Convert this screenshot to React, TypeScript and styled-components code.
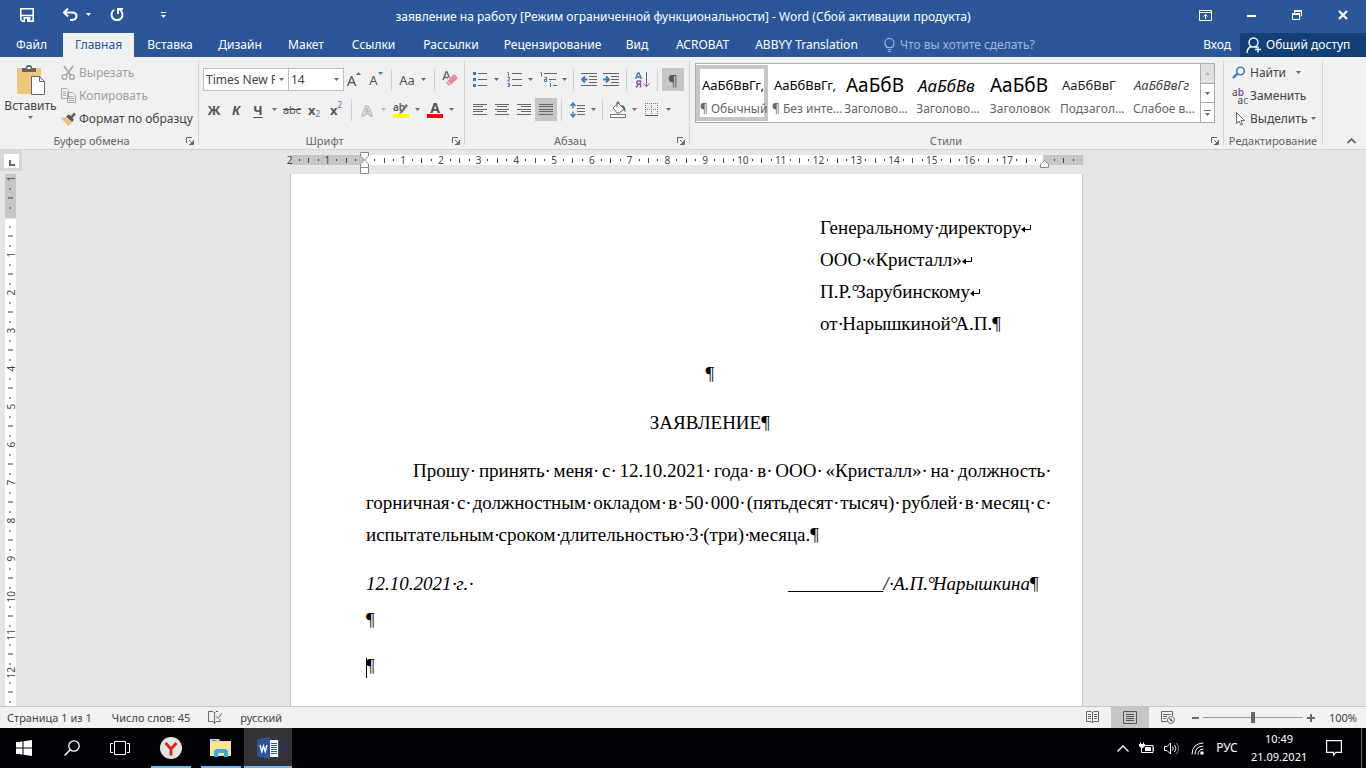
import React from "react";
import styled, { createGlobalStyle, css } from "styled-components";

const blue = "#2b579a";
const grey = "#6a6a6a";
const accent = "#3b78b8";
const uiFont = '"Noto Sans", "Open Sans", sans-serif';

const GlobalStyle = createGlobalStyle`
  *, *::before, *::after { box-sizing: border-box; }
  body { margin: 0; font-family: ${uiFont}; font-size: 12px; line-height: 16px; color: #444; }
  button, select, input { font: inherit; color: inherit; }
  button { border: 0; padding: 0; background: none; }
  svg { display: block; flex: none; }
`;

const Window = styled.div`
  display: flex;
  flex-direction: column;
  min-height: 100vh;
  background: #e6e6e6;
`;

/* ---------- title bar ---------- */

const TitleBar = styled.header`
  display: grid;
  grid-template-columns: 1fr auto 1fr;
  height: 33px;
  background: ${blue};
  color: #fff;
`;

const QuickAccess = styled.div`
  display: flex;
  align-items: center;
  padding: 0 0 4px 16px;
`;

const QuickButton = styled.button<{ $w: number; $gap?: number }>`
  display: flex;
  justify-content: center;
  width: ${(p) => p.$w}px;
  margin-left: ${(p) => p.$gap ?? 0}px;
`;

const Title = styled.h1`
  margin: 0;
  padding-top: 1px;
  font-size: 12px;
  line-height: 32px;
  font-weight: 400;
  white-space: nowrap;
`;

const WindowButtons = styled.div`
  display: flex;
  justify-content: flex-end;
  align-items: center;
  padding-bottom: 3px;
`;

const WindowButton = styled.button`
  display: flex;
  justify-content: center;
  width: 46px;
`;

/* ---------- tabs ---------- */

const TabBar = styled.nav`
  display: flex;
  height: 24px;
  background: ${blue};
  color: #fff;
`;

const Tab = styled.button<{ $w: number; $active?: boolean }>`
  width: ${(p) => p.$w}px;
  text-align: center;
  white-space: nowrap;
  ${(p) =>
    p.$active &&
    css`
      background: #f1f1f1;
      color: ${blue};
    `}
`;

const TellMe = styled.label`
  display: flex;
  flex: 1;
  align-items: center;
  gap: 5px;
  padding-left: 14px;
`;

const TellMeInput = styled.input`
  flex: 1;
  min-width: 0;
  padding: 0;
  border: 0;
  outline: 0;
  background: none;
  &::placeholder { color: #9fb6d8; opacity: 1; }
`;

const SignIn = styled.a`
  padding: 0 9px;
  color: #fff;
  line-height: 24px;
  text-decoration: none;
`;

const Share = styled.button`
  display: flex;
  align-items: center;
  gap: 4px;
  width: 126px;
  padding-left: 6px;
  background: #123f76;
`;

/* ---------- ribbon ---------- */

const Ribbon = styled.section`
  display: flex;
  height: 93px;
  background: #f1f1f1;
  border-bottom: 1px solid #d2d2d2;
`;

const Group = styled.div<{ $w?: number; $left: number; $right?: number }>`
  position: relative;
  display: flex;
  flex-direction: column;
  ${(p) => (p.$w ? `width: ${p.$w}px; flex: none;` : "flex: 1; min-width: 0;")}
  margin: 4px 0;
  padding: 0 ${(p) => p.$right ?? 0}px 0 ${(p) => p.$left}px;
  border-right: 1px solid #d4d4d4;
`;

const GroupBody = styled.div<{ $column?: boolean }>`
  display: flex;
  flex: none;
  flex-direction: ${(p) => (p.$column ? "column" : "row")};
  height: 72px;
`;

const GroupLabel = styled.div<{ $launcher?: boolean }>`
  height: 12px;
  padding-right: ${(p) => (p.$launcher ? 18 : 0)}px;
  color: #666;
  font-size: 11px;
  text-align: center;
  white-space: nowrap;
`;

const Launcher = styled.button`
  position: absolute;
  right: 4px;
  bottom: 0;
`;

const PasteButton = styled.button`
  display: flex;
  flex: none;
  flex-direction: column;
  align-items: center;
  width: 55px;
  padding-top: 4px;
  gap: 2px;
`;

const Commands = styled.div<{ $left: number }>`
  display: flex;
  flex: none;
  flex-direction: column;
  align-items: flex-start;
  padding-left: ${(p) => p.$left}px;
`;

const Command = styled.button<{ $muted?: boolean; $gap?: number }>`
  display: flex;
  align-items: center;
  gap: ${(p) => p.$gap ?? 3}px;
  height: 23px;
  white-space: nowrap;
  color: ${(p) => (p.$muted ? "#a0a0a0" : "#444")};
`;

const ToolRow = styled.div`
  display: flex;
  flex: none;
  align-items: center;
  height: 23px;
  margin-top: 7px;
`;

const Tool = styled.button<{ $on?: boolean }>`
  display: flex;
  flex: none;
  align-items: center;
  justify-content: center;
  width: 22px;
  height: 23px;
  background: ${(p) => (p.$on ? "#c6c6c6" : "none")};
  color: #555;
`;

const CaretButton = styled.button<{ $gap?: number }>`
  display: flex;
  flex: none;
  align-items: center;
  justify-content: center;
  width: 10px;
  height: 23px;
  margin-right: ${(p) => p.$gap ?? 0}px;
`;

const Divider = styled.span`
  flex: none;
  width: 1px;
  height: 22px;
  margin: 0 4px;
  background: #d0d0d0;
`;

const Combo = styled.span<{ $w: number }>`
  position: relative;
  display: flex;
  flex: none;
  align-items: center;
  width: ${(p) => p.$w}px;
  height: 23px;
  margin-right: -1px;
  border: 1px solid #c0c0c0;
  background: #fff;
  svg { position: absolute; right: 4px; pointer-events: none; }
`;

const ComboSelect = styled.select`
  appearance: none;
  width: calc(100% - 13px);
  height: 21px;
  padding: 0 0 0 2px;
  border: 0;
  outline: 0;
  background: none;
  overflow: hidden;
`;

const Letter = styled.span<{ $size?: number; $bold?: boolean; $italic?: boolean; $line?: string }>`
  font-size: ${(p) => p.$size ?? 13}px;
  font-weight: ${(p) => (p.$bold ? 700 : 400)};
  font-style: ${(p) => (p.$italic ? "italic" : "normal")};
  text-decoration: ${(p) => p.$line ?? "none"};
  text-underline-offset: 2px;
`;

const Script = styled.span<{ $top?: boolean }>`
  align-self: ${(p) => (p.$top ? "flex-start" : "flex-end")};
  padding: 2px 0;
  font-size: 8px;
  line-height: 10px;
  color: ${accent};
`;

const SizeArrow = styled.svg`
  align-self: flex-start;
  margin-top: 4px;
`;

const Swatch = styled.span<{ $color: string }>`
  display: flex;
  flex-direction: column;
  align-items: center;
  justify-content: flex-end;
  width: 16px;
  height: 17px;
  line-height: 13px;
  border-bottom: 4px solid ${(p) => p.$color};
`;

const Outlined = styled.span`
  font-size: 15px;
  font-weight: 700;
  color: #f1f1f1;
  -webkit-text-stroke: 1px #b0b0b0;
`;

/* ---------- styles gallery ---------- */

const Gallery = styled.div`
  display: flex;
  flex: none;
  height: 60px;
  margin-top: 2px;
  border: 1px solid #ababab;
  background: #fff;
`;

const GalleryItems = styled.div`
  display: flex;
  flex: 1;
  min-width: 0;
  padding: 1px 0;
  overflow: hidden;
`;

const StyleCard = styled.button<{ $on?: boolean }>`
  display: flex;
  flex: none;
  flex-direction: column;
  width: 72px;
  padding: 0;
  border: ${(p) => (p.$on ? "4px solid #c6c6c6" : "4px solid transparent")};
  color: #666;
  text-align: center;
`;

const Preview = styled.span<{ $size: number; $italic?: boolean; $color?: string }>`
  display: block;
  width: 64px;
  height: 33px;
  padding-left: 2px;
  overflow: hidden;
  font-size: ${(p) => p.$size}px;
  line-height: 33px;
  font-style: ${(p) => (p.$italic ? "italic" : "normal")};
  color: ${(p) => p.$color ?? "#000"};
  text-align: left;
  white-space: nowrap;
`;

const StyleName = styled.span`
  display: block;
  width: 100%;
  white-space: nowrap;
`;

const GalleryScroll = styled.div`
  display: flex;
  flex-direction: column;
  width: 14px;
  border-left: 1px solid #ababab;
`;

const GalleryStep = styled.button<{ $off?: boolean }>`
  display: flex;
  flex: 1;
  align-items: center;
  justify-content: center;
  background: ${(p) => (p.$off ? "#e1e1e1" : "#fff")};
  & + & { border-top: 1px solid #ababab; }
`;

const RibbonEnd = styled.div`
  display: flex;
  width: 43px;
  align-items: flex-end;
  justify-content: flex-end;
  padding: 0 10px 5px 0;
`;

/* ---------- workspace ---------- */

const Workspace = styled.main`
  display: flex;
  flex: 1;
`;

const LeftRail = styled.div`
  display: flex;
  flex-direction: column;
  width: 22px;
  flex: none;
`;

const TabCorner = styled.div`
  display: flex;
  align-items: center;
  justify-content: center;
  height: 21px;
  margin-bottom: 3px;
  background: #d6d6d6;
`;

const TabSelector = styled.button`
  width: 15px;
  height: 14px;
  padding: 5px 0 0 5px;
  background: #fff;
`;

const VerticalRuler = styled.div`
  display: grid;
  flex: 1;
  grid-auto-rows: minmax(0, 1fr);
  width: 11px;
  contain: size;
  margin-left: 5px;
  background: linear-gradient(to bottom, #c6c6c6 44px, #e6e6e6 44px, #e6e6e6 45px, #fff 45px);
`;

const Centre = styled.div`
  display: flex;
  flex: 1;
  flex-direction: column;
  align-items: center;
  padding-right: 15px;
`;

const HorizontalRuler = styled.div`
  position: relative;
  width: 793px;
  height: 10px;
  margin: 5px 0 9px;
  background: linear-gradient(to right, #c6c6c6 75px, #fff 75px, #fff 752px, #c6c6c6 754px);
`;

const RulerScale = styled.div`
  display: grid;
  grid-auto-flow: column;
  grid-auto-columns: minmax(0, 1fr);
  height: 10px;
  margin: 0 5px 0 -5px;
`;

const Mark = styled.span<{ $vertical?: boolean }>`
  display: flex;
  align-items: center;
  justify-content: center;
  min-width: 0;
  min-height: 0;
  color: #444;
  font-size: 10px;
  line-height: 10px;
  white-space: nowrap;
  ${(p) =>
    p.$vertical &&
    css`
      writing-mode: vertical-rl;
      transform: rotate(180deg);
    `}
`;

const Tick = styled.i<{ $w: number; $h: number }>`
  flex: none;
  width: ${(p) => p.$w}px;
  height: ${(p) => p.$h}px;
  background: #444;
`;

const IndentMarker = styled.svg<{ $x: number; $y: number }>`
  position: absolute;
  left: ${(p) => p.$x}px;
  top: ${(p) => p.$y}px;
`;

const Page = styled.article`
  flex: 1;
  width: 793px;
  padding: 38px 37px 16px 75px;
  border: solid #c6c6c6;
  border-width: 0 1px;
  background: #fff;
  color: #000;
  font-family: "Liberation Serif", "Times New Roman", serif;
  font-size: 19px;
  line-height: 32px;
`;

const Address = styled.address`
  margin: 0 0 18px 454px;
  font-style: normal;
  white-space: nowrap;
`;

const Paragraph = styled.p<{ $align?: string; $tail?: boolean }>`
  margin: 0 0 ${(p) => (p.$tail ? 6 : 17)}px;
  line-height: ${(p) => (p.$tail ? 40 : 32)}px;
  text-align: ${(p) => p.$align ?? "left"};
  &:last-child { margin-bottom: 0; }
`;

const Heading = styled.h2`
  margin: 0 0 16px;
  font-size: 19px;
  font-weight: 400;
  text-align: center;
`;

const Line = styled.span<{ $justify?: boolean; $indent?: boolean }>`
  display: block;
  padding-left: ${(p) => (p.$indent ? 47 : 0)}px;
  white-space: nowrap;
  text-align-last: ${(p) => (p.$justify ? "justify" : "left")};
`;

const Signature = styled.p`
  display: flex;
  justify-content: space-between;
  margin: 0;
  padding-right: 15px;
  font-style: italic;
  white-space: nowrap;
`;

const HiddenMark = styled.span`
  display: inline-block;
  width: 0;
  font-style: normal;
  text-align: left;
  text-align-last: left;
`;

const Cursor = styled.span`
  display: inline-block;
  width: 1px;
  height: 20px;
  margin-right: -1px;
  vertical-align: middle;
  background: #000;
`;

const BreakArrow = styled.svg`
  display: inline-block;
`;

/* ---------- status bar ---------- */

const StatusBar = styled.footer`
  display: flex;
  align-items: center;
  height: 22px;
  border-top: 1px solid #c6c6c6;
  background: #f1f1f1;
  font-size: 11px;
`;

const StatusItem = styled.button<{ $left: number }>`
  margin-left: ${(p) => p.$left}px;
  white-space: nowrap;
`;

const StatusRight = styled.div`
  display: flex;
  align-items: center;
  height: 21px;
  margin-left: auto;
  padding-right: 9px;
`;

const ViewButton = styled.button<{ $on?: boolean }>`
  display: flex;
  align-items: center;
  justify-content: center;
  width: 38px;
  height: 21px;
  background: ${(p) => (p.$on ? "#c6c6c6" : "none")};
`;

const ZoomStep = styled.button`
  display: flex;
  justify-content: center;
  width: 16px;
`;

const ZoomRange = styled.input`
  appearance: none;
  width: 100px;
  height: 12px;
  margin: 0;
  background: linear-gradient(#9a9a9a, #9a9a9a) center / 100% 1px no-repeat;
  &::-webkit-slider-thumb {
    appearance: none;
    width: 4px;
    height: 11px;
    background: #666;
  }
`;

const ZoomValue = styled.output`
  width: 38px;
  text-align: right;
`;

/* ---------- taskbar ---------- */

const Taskbar = styled.nav`
  display: flex;
  height: 40px;
  background: #000206;
  color: #fff;
`;

const TaskButton = styled.button<{ $w?: number; $bar?: number; $active?: boolean }>`
  display: flex;
  flex: none;
  align-items: center;
  justify-content: center;
  width: ${(p) => p.$w ?? 48}px;
  background: ${(p) => {
    const bar = p.$bar
      ? `linear-gradient(#76b9ed, #76b9ed) center bottom / ${p.$bar}px 2px no-repeat`
      : "";
    return [bar, p.$active ? "linear-gradient(#333438, #333438)" : ""].filter(Boolean).join(", ") || "none";
  }};
`;

const Tray = styled.div`
  display: flex;
  align-items: center;
  margin-left: auto;
`;

const Language = styled.button`
  width: 36px;
  margin-right: 6px;
  font-size: 12px;
`;

const Clock = styled.time`
  width: 56px;
  font-size: 11px;
  line-height: 18px;
  text-align: center;
`;

const ShowDesktop = styled.button`
  width: 5px;
  height: 40px;
  border-left: 1px solid #666;
`;

/* ---------- icons ---------- */

const Icon = ({ w = 16, h = 16, children }: { w?: number; h?: number; children: React.ReactNode }) => (
  <svg width={w} height={h} viewBox={`0 0 ${w} ${h}`} fill="none" aria-hidden="true">
    {children}
  </svg>
);

const Caret = ({ color = grey }: { color?: string }) => (
  <Icon w={5} h={3}>
    <path d="M0 0h5L2.5 3z" fill={color} />
  </Icon>
);

const linesPath = (rows: [number, number, number][]) => rows.map(([x, y, w]) => `M${x} ${y}.5h${w}`).join("");

const AlignIcon = ({ kind }: { kind: "left" | "center" | "right" | "full" }) => {
  const short = { left: 0, center: 2, right: 4, full: 0 }[kind];
  const w = kind === "full" ? 14 : 10;
  return (
    <Icon w={14} h={11}>
      <path
        stroke="#666"
        d={linesPath([[0, 0, 14], [short, 2, w], [0, 5, 14], [short, 7, w], [0, 10, 14]])}
      />
    </Icon>
  );
};

const LauncherIcon = () => (
  <Icon w={8} h={8}>
    <path d="M.5 6V.5H6M3 3l3 3M7.5 3v4.5H3" stroke={grey} />
    <path d="M7 4v3H4z" fill={grey} />
  </Icon>
);

const PasteIcon = () => (
  <Icon w={28} h={31}>
    <rect y="3" width="24" height="26" rx="1" fill="#eec77c" />
    <path d="M5 3h4V2a3 2 0 0 1 6 0v1h4v4H5z" fill="#666" />
    <rect x="10.500" y="2" width="3" height="2" fill="#f1f1f1" />
    <path d="M14.500 11.500h8l5 5v13h-13z" fill="#fff" stroke="#666" />
    <path d="M22.500 11.500v5h5" stroke="#666" />
  </Icon>
);

const ScissorsIcon = () => (
  <Icon w={15}>
    <path d="M3 1l6.500 9M12 1L5.500 10" stroke="#a8a8a8" strokeWidth="1.800" />
    <circle cx="3.500" cy="12" r="2.400" stroke="#a8a8a8" strokeWidth="1.300" />
    <circle cx="11" cy="12" r="2.400" stroke="#a8a8a8" strokeWidth="1.300" />
  </Icon>
);

const CopyIcon = () => (
  <Icon w={15} h={15}>
    <path d="M.5.5h5l2 2v8h-7zM6.500 4.500h5l3 3v7h-8z" fill="#f1f1f1" stroke="#a8a8a8" />
    <path d="M2 3.500h3M2 5.500h3M2 7.500h3M8 8.500h4M8 10.500h5M8 12.500h5" stroke="#a8a8a8" />
  </Icon>
);

const BrushIcon = () => (
  <Icon w={15} h={14}>
    <path d="M0 6l5-1 6 6-4 3z" fill="#eec077" />
    <path d="M5 4.500L8 2.500l5 5-2 2.500z" fill="#555" />
    <path d="M9 4.500l4-4 2 2-4 4z" fill="#666" />
  </Icon>
);

const EraserIcon = () => (
  <Icon w={16} h={17}>
    <path d="M1 9l3-8h1l2.500 6M2 6.500h4" stroke="#666" strokeWidth="1.400" />
    <path d="M4 11.500l7-7.500q1.500-1 2.500 0l1.500 2q1 1 0 2l-7 6.500H6.500z" fill="#ec8a9c" />
    <path d="M4.500 9.500l5 5" stroke="#f1f1f1" />
  </Icon>
);

const BulletsIcon = () => (
  <Icon w={14} h={15}>
    <path d="M0 0h3v3H0zM0 6h3v3H0zM0 12h3v3H0z" fill={accent} />
    <path d="M5 1.500h9M5 7.500h9M5 13.500h9" stroke="#666" />
  </Icon>
);

const NumbersIcon = () => (
  <Icon w={15} h={17}>
    <path
      d="M.5 1.500h1v4M.5 6.500h2v1.500l-2 2h2.500M.5 12.500h2v3h-2M1 14h1.500"
      stroke={accent}
    />
    <path d="M5 2.500h10M5 8.500h10M5 14.500h10" stroke="#666" />
  </Icon>
);

const MultilevelIcon = () => (
  <Icon w={17} h={17}>
    <path d="M.5 1.500h1v4M4.500 6.500h2v4h-2v-2h2M10.500 12v4M10.500 10v1" stroke={accent} />
    <path d="M4 2.500h13M9 8.500h7M13 14.500h4" stroke="#666" />
  </Icon>
);

const IndentIcon = ({ out }: { out?: boolean }) => (
  <Icon w={16} h={13}>
    <path d="M0 .5h16M8 3.500h8M8 6.500h8M8 9.500h8M0 12.500h16" stroke="#666" />
    <path
      d={out ? "M6.500 6.500H1M4 3.500l-3 3 3 3" : "M0 6.500h5.500M3 3.500l3 3-3 3"}
      stroke={accent}
      strokeWidth="1.800"
    />
  </Icon>
);

const SortIcon = () => (
  <Icon w={15} h={16}>
    <path d="M.5 7l2.500-6h1l2.500 6M1.500 5h4" stroke={accent} strokeWidth="1.400" />
    <path d="M5.500 15.500v-6.500h-3q-1.500 1.500 0 3h3M3.500 12l-2.500 3.500" stroke="#8a4fb0" strokeWidth="1.400" />
    <path d="M11.500 0v14M8.500 11.500l3 3 3-3" stroke="#666" />
  </Icon>
);

const SpacingIcon = () => (
  <Icon w={15} h={16}>
    <path d="M3 1.500v5M3 9.500v5M.5 4L3 1l2.500 3M.5 12L3 15l2.500-3" stroke={accent} strokeWidth="1.400" />
    <path d="M7 3.500h8M7 6.500h8M7 9.500h8M7 12.500h8" stroke="#666" />
  </Icon>
);

const FillIcon = () => (
  <Icon w={17} h={17}>
    <path d="M3 7l5-5 6 6-5 4H7z" fill="#fff" stroke="#666" />
    <path d="M7 6V1h2v2" stroke="#666" />
    <path d="M11 4q5 0 4.500 7-2.500-1-2-3z" fill={accent} />
    <rect x=".5" y="13.500" width="15" height="3" fill="#fff" stroke="#777" />
  </Icon>
);

const BordersIcon = () => (
  <Icon w={14} h={14}>
    <path d="M.5 0v13M6.500 0v13M12.500 0v13M0 .5h13M0 6.500h13" stroke="#777" strokeDasharray="1 1" />
    <path d="M0 12.500h13" stroke="#555" />
  </Icon>
);

const HighlighterIcon = () => (
  <Icon w={16} h={16}>
    <path d="M7 10l6-8 2 1.500-6 7.500-3 1z" fill="#777" />
    <rect y="12" width="16" height="4" fill="#ff0" />
  </Icon>
);

const FindIcon = () => (
  <Icon w={14} h={13}>
    <circle cx="8.500" cy="5" r="3.800" fill="#fff" stroke={accent} strokeWidth="1.600" />
    <path d="M5.500 7.500L1 12" stroke={accent} strokeWidth="2.400" />
  </Icon>
);

const SelectIcon = () => (
  <Icon w={14} h={14}>
    <path d="M4.500.500v11l2.500-2.500 2 4 1.500-.5-1.500-4h3.500z" fill="#fff" stroke="#666" />
  </Icon>
);

const ReplaceGlyph = styled.span`
  display: grid;
  width: 16px;
  font-size: 10px;
  line-height: 8px;
  text-align: left;
  b { font-weight: 600; color: #8a4fb0; }
  i { font-style: normal; color: ${accent}; }
  span + span { text-align: right; }
`;

const HighlightTool = styled.span`
  display: grid;
  width: 16px;
  height: 16px;
  > * { grid-area: 1 / 1; }
  > span { font-size: 10px; line-height: 10px; text-align: left; font-weight: 600; }
`;

/* ---------- document text ---------- */

/* Renders text with visible marks: a dot for a space and a ring for a hard space. */
const Marked = ({ text }: { text: string }) => (
  <>
    {text.split(/([ \u00a0])/).map((part, i) =>
      part === " " ? (
        <React.Fragment key={i}>
          <HiddenMark>·</HiddenMark>{" "}
        </React.Fragment>
      ) : part === "\u00a0" ? (
        <React.Fragment key={i}>
          <HiddenMark>°</HiddenMark>
          {"\u00a0"}
        </React.Fragment>
      ) : (
        part
      )
    )}
  </>
);

const Pilcrow = () => <HiddenMark>¶</HiddenMark>;

const LineBreak = () => (
  <BreakArrow width="10" height="9" viewBox="0 0 10 9" aria-hidden="true">
    <path d="M9.500 0v4.500H3" fill="none" stroke="#000" />
    <path d="M0 4.500L4 1.500v6z" />
  </BreakArrow>
);

const addressLines = ["Генеральному директору", "ООО «Кристалл»", "П.Р.\u00a0Зарубинскому"];

/* ---------- ruler marks: four to a centimetre ---------- */

const RulerMarks = ({ from, count, skip, vertical }: { from: number; count: number; skip: number[]; vertical?: boolean }) => (
  <>
    {Array.from({ length: count }, (_, i) => {
      const quarter = from * 4 + i;
      const cm = quarter / 4;
      const rest = ((quarter % 4) + 4) % 4;
      return (
        <Mark key={i} $vertical={vertical}>
          {rest === 0 && !skip.includes(cm) && Math.abs(cm)}
          {rest === 2 && <Tick $w={vertical ? 5 : 1} $h={vertical ? 1 : 5} />}
          {(rest === 1 || rest === 3) && <Tick $w={vertical ? 2 : 1} $h={vertical ? 1 : 2} />}
        </Mark>
      );
    })}
  </>
);

const tabs = [
  { name: "Файл", w: 63 },
  { name: "Главная", w: 71, active: true },
  { name: "Вставка", w: 72 },
  { name: "Дизайн", w: 68 },
  { name: "Макет", w: 64 },
  { name: "Ссылки", w: 71 },
  { name: "Рассылки", w: 84 },
  { name: "Рецензирование", w: 119 },
  { name: "Вид", w: 50 },
  { name: "ACROBAT", w: 81 },
  { name: "ABBYY Translation", w: 127 },
];

const gallery = [
  { sample: "АаБбВвГг,", name: "¶ Обычный", size: 13, on: true },
  { sample: "АаБбВвГг,", name: "¶ Без инте...", size: 13 },
  { sample: "АаБбВ", name: "Заголово...", size: 19 },
  { sample: "АаБбВв", name: "Заголово...", size: 17, italic: true },
  { sample: "АаБбВ", name: "Заголовок", size: 19 },
  { sample: "АаБбВвГ", name: "Подзагол...", size: 13, color: "#222" },
  { sample: "АаБбВвГг", name: "Слабое в...", size: 13, italic: true, color: "#404040" },
];

export default function App() {
  return (
    <Window>
      <GlobalStyle />
      <TitleBar>
        <QuickAccess>
          <QuickButton $w={22} aria-label="Сохранить">
            <Icon w={14} h={14}>
              <path d="M.8.8h12.400v12.400H2.500L.8 11.500zM1 7.500h12" stroke="#fff" strokeWidth="1.600" />
              <path d="M3.500 9h7v5h-7z" fill="#fff" />
              <path d="M5 11h2v3H5z" fill={blue} />
            </Icon>
          </QuickButton>
          <QuickButton $w={22} $gap={21} aria-label="Отменить">
            <Icon w={15} h={13}>
              <path d="M1 4.500h8q4.500 0 4.500 3.500T9 12H7M5 .5l-4 4 4 4" stroke="#fff" strokeWidth="2" />
            </Icon>
          </QuickButton>
          <QuickButton $w={14} aria-label="Список отмены"><Caret color="#fff" /></QuickButton>
          <QuickButton $w={22} $gap={11} aria-label="Повторить">
            <Icon w={14} h={14}>
              <path d="M4 2a5.500 5.500 0 1 0 6 0" stroke="#fff" strokeWidth="2" />
              <path d="M8 6V1h5" stroke="#fff" strokeWidth="2" />
            </Icon>
          </QuickButton>
          <QuickButton $w={14} $gap={28} aria-label="Настройка панели">
            <Icon w={5} h={6}>
              <path d="M0 .5h5" stroke="#fff" />
              <path d="M0 3h5L2.500 6z" fill="#fff" />
            </Icon>
          </QuickButton>
        </QuickAccess>
        <Title>заявление на работу [Режим ограниченной функциональности] - Word (Сбой активации продукта)</Title>
        <WindowButtons>
          <WindowButton aria-label="Параметры ленты">
            <Icon w={13} h={11}>
              <path d="M.5.500h12v10H.5zM.5 2.500h12M6.500 9V4.500M4.500 6.500l2-2 2 2" stroke="#fff" />
            </Icon>
          </WindowButton>
          <WindowButton aria-label="Свернуть">
            <Icon w={9} h={10}><path d="M0 6h9" stroke="#fff" strokeWidth="2" /></Icon>
          </WindowButton>
          <WindowButton aria-label="Свернуть в окно">
            <Icon w={10} h={10}>
              <path d="M2.500 3V.5h7v5.500h-2M.5 3.500h7v6h-7z" stroke="#fff" />
              <path d="M2 1h8M0 4h8" stroke="#fff" strokeWidth="2" />
            </Icon>
          </WindowButton>
          <WindowButton aria-label="Закрыть">
            <Icon w={10} h={10}><path d="M1 1l8 8M9 1L1 9" stroke="#fff" strokeWidth="2.200" /></Icon>
          </WindowButton>
        </WindowButtons>
      </TitleBar>

      <TabBar>
        {tabs.map((t) => (
          <Tab key={t.name} $w={t.w} $active={t.active}>{t.name}</Tab>
        ))}
        <TellMe>
          <Icon w={11} h={14}>
            <path d="M3 9.500Q1 7.500 1 5a4.500 4.500 0 0 1 9 0q0 2.500-2 4.500zM3.500 11.500h4M4 13.500h3" stroke="#9fb6d8" strokeWidth="1.200" />
          </Icon>
          <TellMeInput aria-label="Что вы хотите сделать?" placeholder="Что вы хотите сделать?" />
        </TellMe>
        <SignIn href="#signin">Вход</SignIn>
        <Share>
          <Icon w={16} h={16}>
            <circle cx="7.500" cy="5.500" r="4.500" stroke="#fff" strokeWidth="1.400" />
            <path d="M1 16q0-5 4.500-6.500M9 9.500l2 1M12 9.500v6M9 12.500h6" stroke="#fff" strokeWidth="1.400" />
          </Icon>
          Общий доступ
        </Share>
      </TabBar>

      <Ribbon>
        <Group $w={199} $left={3}>
          <GroupBody>
            <PasteButton>
              <PasteIcon />
              Вставить
              <Caret />
            </PasteButton>
            <Commands $left={3}>
              <Command $muted><ScissorsIcon />Вырезать</Command>
              <Command $muted><CopyIcon />Копировать</Command>
              <Command><BrushIcon />Формат по образцу</Command>
            </Commands>
          </GroupBody>
          <GroupLabel $launcher>Буфер обмена</GroupLabel>
          <Launcher aria-label="Буфер обмена"><LauncherIcon /></Launcher>
        </Group>

        <Group $w={266} $left={4}>
          <GroupBody $column>
            <ToolRow>
              <Combo $w={86}>
                <ComboSelect aria-label="Шрифт"><option>Times New Roman</option></ComboSelect>
                <Caret />
              </Combo>
              <Combo $w={56}>
                <ComboSelect aria-label="Размер шрифта"><option>14</option></ComboSelect>
                <Caret />
              </Combo>
              <Tool aria-label="Увеличить размер">
                <Letter $size={15}>A</Letter>
                <SizeArrow width="5" height="3" viewBox="0 0 5 3"><path d="M0 3h5L2.500 0z" fill={accent} /></SizeArrow>
              </Tool>
              <Tool aria-label="Уменьшить размер">
                <Letter>A</Letter>
                <SizeArrow width="5" height="3" viewBox="0 0 5 3"><path d="M0 0h5L2.500 3z" fill={accent} /></SizeArrow>
              </Tool>
              <Divider />
              <Tool aria-label="Регистр"><Letter>Aa</Letter></Tool>
              <CaretButton $gap={2} aria-label="Варианты регистра"><Caret /></CaretButton>
              <Divider />
              <Tool aria-label="Удалить форматирование"><EraserIcon /></Tool>
            </ToolRow>
            <ToolRow>
              <Tool aria-label="Полужирный"><Letter $bold>Ж</Letter></Tool>
              <Tool aria-label="Курсив"><Letter $bold $italic>К</Letter></Tool>
              <Tool aria-label="Подчёркнутый"><Letter $bold $line="underline">Ч</Letter></Tool>
              <CaretButton $gap={2} aria-label="Вид подчёркивания"><Caret /></CaretButton>
              <Tool aria-label="Зачёркнутый"><Letter $size={11} $line="line-through">abc</Letter></Tool>
              <Tool aria-label="Подстрочный"><Letter $bold>x</Letter><Script>2</Script></Tool>
              <Tool aria-label="Надстрочный"><Letter $bold>x</Letter><Script $top>2</Script></Tool>
              <Divider />
              <Tool aria-label="Текстовые эффекты"><Outlined>A</Outlined></Tool>
              <CaretButton $gap={2} aria-label="Варианты эффектов"><Caret color="#b8b8b8" /></CaretButton>
              <Tool aria-label="Цвет выделения">
                <HighlightTool><span>ab</span><HighlighterIcon /></HighlightTool>
              </Tool>
              <CaretButton $gap={2} aria-label="Цвета выделения"><Caret /></CaretButton>
              <Tool aria-label="Цвет текста">
                <Swatch $color="#f00"><Letter $size={14} $bold>A</Letter></Swatch>
              </Tool>
              <CaretButton aria-label="Цвета текста"><Caret /></CaretButton>
            </ToolRow>
          </GroupBody>
          <GroupLabel $launcher>Шрифт</GroupLabel>
          <Launcher aria-label="Шрифт"><LauncherIcon /></Launcher>
        </Group>

        <Group $w={225} $left={4}>
          <GroupBody $column>
            <ToolRow>
              <Tool aria-label="Маркеры"><BulletsIcon /></Tool>
              <CaretButton $gap={2} aria-label="Виды маркеров"><Caret /></CaretButton>
              <Tool aria-label="Нумерация"><NumbersIcon /></Tool>
              <CaretButton $gap={2} aria-label="Виды нумерации"><Caret /></CaretButton>
              <Tool aria-label="Многоуровневый список"><MultilevelIcon /></Tool>
              <CaretButton aria-label="Виды списков"><Caret /></CaretButton>
              <Divider />
              <Tool aria-label="Уменьшить отступ"><IndentIcon out /></Tool>
              <Tool aria-label="Увеличить отступ"><IndentIcon /></Tool>
              <Divider />
              <Tool aria-label="Сортировка"><SortIcon /></Tool>
              <Divider />
              <Tool $on aria-label="Отобразить все знаки"><Letter $size={15}>¶</Letter></Tool>
            </ToolRow>
            <ToolRow>
              <Tool aria-label="По левому краю"><AlignIcon kind="left" /></Tool>
              <Tool aria-label="По центру"><AlignIcon kind="center" /></Tool>
              <Tool aria-label="По правому краю"><AlignIcon kind="right" /></Tool>
              <Tool $on aria-label="По ширине"><AlignIcon kind="full" /></Tool>
              <Divider />
              <Tool aria-label="Интервал"><SpacingIcon /></Tool>
              <CaretButton aria-label="Виды интервалов"><Caret /></CaretButton>
              <Divider />
              <Tool aria-label="Заливка"><FillIcon /></Tool>
              <CaretButton $gap={2} aria-label="Цвета заливки"><Caret /></CaretButton>
              <Tool aria-label="Границы"><BordersIcon /></Tool>
              <CaretButton aria-label="Виды границ"><Caret /></CaretButton>
            </ToolRow>
          </GroupBody>
          <GroupLabel $launcher>Абзац</GroupLabel>
          <Launcher aria-label="Абзац"><LauncherIcon /></Launcher>
        </Group>

        <Group $left={5} $right={8}>
          <GroupBody $column>
            <Gallery>
              <GalleryItems>
                {gallery.map((s, i) => (
                  <StyleCard key={i} $on={s.on}>
                    <Preview $size={s.size} $italic={s.italic} $color={s.color}>{s.sample}</Preview>
                    <StyleName>{s.name}</StyleName>
                  </StyleCard>
                ))}
              </GalleryItems>
              <GalleryScroll>
                <GalleryStep $off aria-label="Вверх">
                  <Icon w={5} h={3}><path d="M0 3h5L2.500 0z" fill="#b0b0b0" /></Icon>
                </GalleryStep>
                <GalleryStep aria-label="Вниз"><Caret /></GalleryStep>
                <GalleryStep aria-label="Все стили">
                  <Icon w={7} h={6}><path d="M0 .5h7" stroke={grey} /><path d="M1 3h5L3.500 6z" fill={grey} /></Icon>
                </GalleryStep>
              </GalleryScroll>
            </Gallery>
          </GroupBody>
          <GroupLabel $launcher>Стили</GroupLabel>
          <Launcher aria-label="Стили"><LauncherIcon /></Launcher>
        </Group>

        <Group $w={99} $left={0}>
          <GroupBody>
            <Commands $left={8}>
              <Command $gap={4}><FindIcon />Найти&nbsp;&nbsp;<Caret /></Command>
              <Command $gap={2}>
                <ReplaceGlyph aria-hidden="true"><span>a<b>b</b></span><span>a<i>c</i></span></ReplaceGlyph>
                Заменить
              </Command>
              <Command $gap={4}><SelectIcon />Выделить<Caret /></Command>
            </Commands>
          </GroupBody>
          <GroupLabel>Редактирование</GroupLabel>
        </Group>
        <RibbonEnd>
          <button aria-label="Свернуть ленту">
            <Icon w={9} h={6}><path d="M.5 5L4.500 1l4 4" stroke={grey} strokeWidth="1.800" /></Icon>
          </button>
        </RibbonEnd>
      </Ribbon>

      <Workspace>
        <LeftRail>
          <TabCorner>
            <TabSelector aria-label="Табуляция">
              <Icon w={6} h={6}><path d="M1 0v5h5" stroke="#666" strokeWidth="2" /></Icon>
            </TabSelector>
          </TabCorner>
          <VerticalRuler>
            <RulerMarks from={-1} count={56} skip={[0]} vertical />
          </VerticalRuler>
        </LeftRail>
        <Centre>
          <HorizontalRuler>
            <RulerScale>
              <RulerMarks from={-2} count={84} skip={[0, 18]} />
            </RulerScale>
            <IndentMarker $x={70} $y={-3} width="9" height="22" viewBox="0 0 9 22">
              <path d="M.5.500h8V4l-4 4 4 4v3.500h-8V12l4-4-4-4zM.5 15.500h8v6h-8z" fill="#fff" stroke="#888" />
            </IndentMarker>
            <IndentMarker $x={750} $y={5} width="9" height="8" viewBox="0 0 9 8">
              <path d="M.5 7.500V4l4-3.500 4 3.500v3.500z" fill="#fff" stroke="#888" />
            </IndentMarker>
          </HorizontalRuler>
          <Page>
            <Address>
              {addressLines.map((line) => (
                <Line key={line}><Marked text={line} /><LineBreak /></Line>
              ))}
              <Line><Marked text={"от Нарышкиной\u00a0А.П."} /><Pilcrow /></Line>
            </Address>
            <Paragraph $align="center"><Pilcrow /></Paragraph>
            <Heading>ЗАЯВЛЕНИЕ<Pilcrow /></Heading>
            <Paragraph>
              <Line $justify $indent>
                <Marked text="Прошу принять меня с 12.10.2021 года в ООО «Кристалл» на должность " />
              </Line>
              <Line $justify>
                <Marked text="горничная с должностным окладом в 50 000 (пятьдесят тысяч) рублей в месяц с " />
              </Line>
              <Line>
                <Marked text="испытательным сроком длительностью 3 (три) месяца." /><Pilcrow />
              </Line>
            </Paragraph>
            <Signature>
              <span><Marked text="12.10.2021 г. " /></span>
              <span><Marked text={"__________/ А.П.\u00a0Нарышкина"} /><Pilcrow /></span>
            </Signature>
            <Paragraph $tail><Pilcrow /></Paragraph>
            <Paragraph $tail><Cursor /><Pilcrow /></Paragraph>
          </Page>
        </Centre>
      </Workspace>

      <StatusBar>
        <StatusItem $left={7}>Страница 1 из 1</StatusItem>
        <StatusItem $left={20}>Число слов: 45</StatusItem>
        <StatusItem $left={18} aria-label="Правописание">
          <Icon w={15} h={13}>
            <path d="M6.500 12.500V2L5 .5H.5v10H5l1.500 2 1.500-2h4V8M6.500 2L8 .5h2M8 5.500l2 2 4-5.500" stroke={grey} />
          </Icon>
        </StatusItem>
        <StatusItem $left={17}>русский</StatusItem>
        <StatusRight>
          <ViewButton aria-label="Режим чтения">
            <Icon w={13} h={13}>
              <path d="M.5.500H5l1.500 1L8 .5h4.500v10H8l-1.500 1.500L5 10.500H.5zM6.500 1v11M2 3.500h3M2 5.500h3M2 7.500h3M8 3.500h3M8 5.500h3M8 7.500h3" stroke={grey} />
            </Icon>
          </ViewButton>
          <ViewButton $on aria-label="Разметка страницы">
            <Icon w={14} h={13}>
              <path d="M.5.500h13v12H.5zM3 3.500h8M3 5.500h8M3 7.500h8M3 9.500h8" stroke="#555" />
            </Icon>
          </ViewButton>
          <ViewButton aria-label="Веб-документ">
            <Icon w={14} h={13}>
              <path d="M6 10.500H.5V.500h11V5M2 3.500h8M2 5.500h4M2 7.500h3" stroke={grey} />
              <circle cx="10" cy="9" r="3.500" fill="#fff" stroke={grey} />
              <path d="M8 7l3 1 1 3-3-1z" fill={grey} />
            </Icon>
          </ViewButton>
          <ZoomStep aria-label="Уменьшить масштаб">
            <Icon w={7} h={8}><path d="M0 4h7" stroke={grey} strokeWidth="2" /></Icon>
          </ZoomStep>
          <ZoomRange type="range" min={0} max={100} defaultValue={50} aria-label="Масштаб" />
          <ZoomStep aria-label="Увеличить масштаб">
            <Icon w={8} h={8}><path d="M0 4h8M4 0v8" stroke={grey} strokeWidth="2" /></Icon>
          </ZoomStep>
          <ZoomValue>100%</ZoomValue>
        </StatusRight>
      </StatusBar>

      <Taskbar>
        <TaskButton aria-label="Пуск">
          <Icon w={16} h={16}>
            <path d="M0 2.300L6.500 1.400v6.100H0zM7.500 1.200L16 0v7.500H7.500zM0 8.500h6.500v6.100L0 13.700zM7.500 8.500H16V16l-8.500-1.200z" fill="#fff" />
          </Icon>
        </TaskButton>
        <TaskButton aria-label="Поиск">
          <Icon w={16} h={16}>
            <circle cx="10" cy="6" r="5.200" stroke="#fff" strokeWidth="1.300" />
            <path d="M6.300 9.700L.5 15.500" stroke="#fff" strokeWidth="1.500" />
          </Icon>
        </TaskButton>
        <TaskButton aria-label="Представление задач">
          <Icon w={20} h={14}>
            <path d="M4.500.500h11v13h-11zM3 2.500H.5v9H3M17 2.500h2.500v9H17" stroke="#fff" />
          </Icon>
        </TaskButton>
        <TaskButton $w={54} $bar={40} aria-label="Яндекс Браузер">
          <Icon w={22} h={22}>
            <circle cx="11" cy="11" r="11" fill="#e4e4e4" />
            <path d="M5.500 6l5.500 6 5.500-6M11 11.500v7" stroke="#e01f1f" strokeWidth="2.800" />
          </Icon>
        </TaskButton>
        <TaskButton $w={46} $bar={40} aria-label="Проводник">
          <Icon w={22} h={18}>
            <path d="M0 0h9l1 2h11v15H0z" fill="#f7d878" />
            <path d="M0 3h21v14H0z" fill="#fbe394" />
            <path d="M2 1h4v1H2z" fill="#38a9e4" />
            <path d="M4 18v-6l2-2h10l2 2v6h-4v-4H8v4z" fill="#38a9e4" />
          </Icon>
        </TaskButton>
        <TaskButton $bar={48} $active aria-label="Word">
          <Icon w={22} h={22}>
            <rect x="12" y="3" width="10" height="17" fill="#fff" />
            <path d="M14 6.500h6M14 8.500h6M14 10.500h6M14 12.500h6M14 14.500h6M14 16.500h6M21.500 3v17" stroke={blue} />
            <path d="M0 2.500L13 0v22L0 19.500z" fill={blue} />
            <path d="M3 8l1.800 6.500L6.500 9l1.700 5.500L10 8" stroke="#fff" strokeWidth="1.400" />
          </Icon>
        </TaskButton>
        <Tray>
          <TaskButton $w={24} aria-label="Скрытые значки">
            <Icon w={12} h={7}><path d="M.5 6.500L6 1l5.500 5.500" stroke="#fff" strokeWidth="1.300" /></Icon>
          </TaskButton>
          <TaskButton $w={24} aria-label="Питание">
            <Icon w={16} h={12}>
              <path d="M5.500 3.500h8.500v7H4M14.500 5.500v3M2.500 6v4.500h2M1.500.500v2M4.500.500v2" stroke="#fff" />
              <path d="M0 2h6v2L4 6H2L0 4zM6 5h6v4H6z" fill="#fff" />
            </Icon>
          </TaskButton>
          <TaskButton $w={26} aria-label="Громкость">
            <Icon w={16} h={13}>
              <path d="M.5 4.500H3L6.500 1v11L3 8.500H.5zM8.500 4.500q1.500 2 0 4M10.500 3q3 3.500 0 7" stroke="#fff" />
              <path d="M12.500 1q4 5.500 0 11" stroke="#888" />
            </Icon>
          </TaskButton>
          <TaskButton $w={24} aria-label="Сеть">
            <Icon w={13} h={13}>
              <path d="M1 12.500Q1 1.500 12.500 1M4 12.500Q4 4.500 12.500 4M7 12.500Q7 7.500 12.500 7" stroke="#fff" />
              <circle cx="11" cy="11" r="1.800" fill="#fff" />
            </Icon>
          </TaskButton>
          <Language>РУС</Language>
          <Clock>10:49<br />21.09.2021</Clock>
          <TaskButton $w={54} aria-label="Центр уведомлений">
            <Icon w={16} h={16}>
              <path d="M.6.600h14.800v11.800H10l-2.500 2.600v-2.600H.6z" stroke="#fff" strokeWidth="1.200" />
            </Icon>
          </TaskButton>
          <ShowDesktop aria-label="Свернуть все окна" />
        </Tray>
      </Taskbar>
    </Window>
  );
}
